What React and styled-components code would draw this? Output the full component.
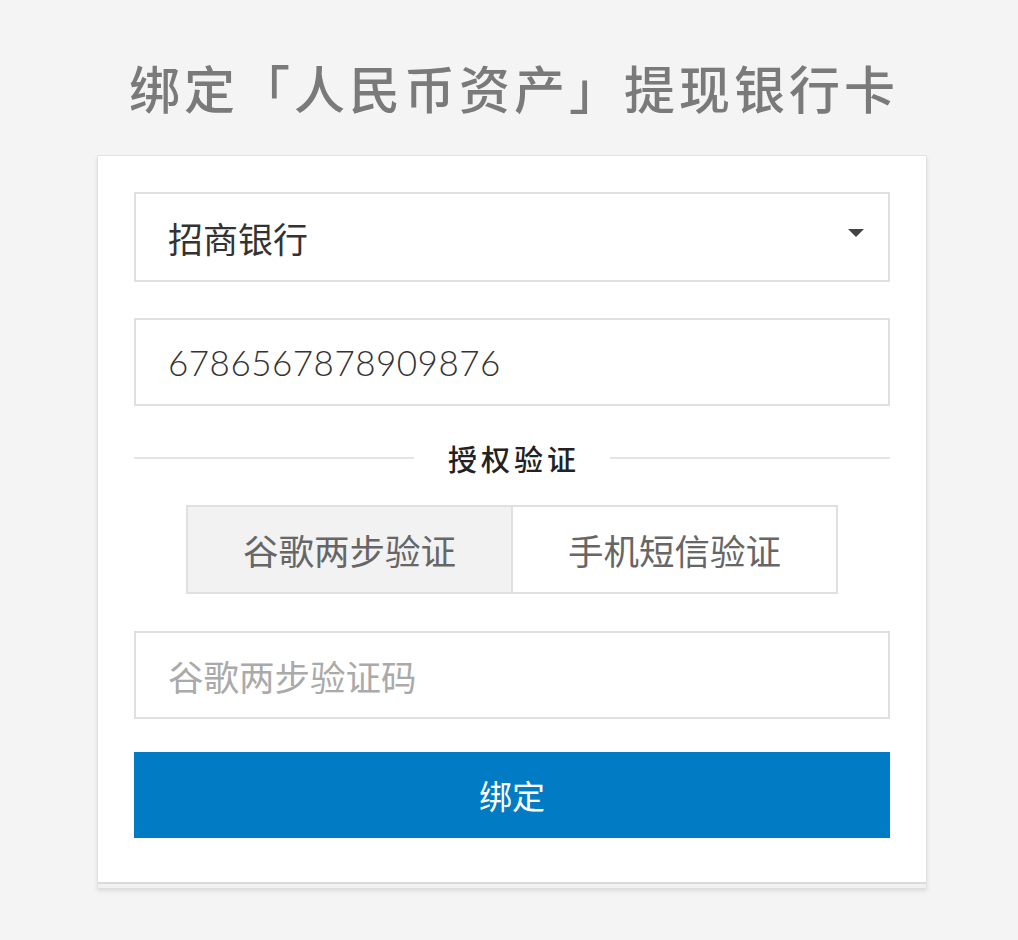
import React, { useState } from "react";
import styled, { createGlobalStyle } from "styled-components";

const GlobalStyle = createGlobalStyle`
  html, body {
    margin: 0;
    padding: 0;
    background: #f4f4f4;
    font-family: "Noto Sans CJK SC", "Lato", sans-serif;
  }
`;

const BindCard = () => {
  const [method, setMethod] = useState("google");

  return (
    <>
      <GlobalStyle />
      <Page>
        <Title>绑定「人民币资产」提现银行卡</Title>
        <Card>
          <CardBody>
            <SelectBox>
              <span>招商银行</span>
              <Caret />
            </SelectBox>
            <Field>
              <NumberText>6786567878909876</NumberText>
            </Field>
            <Divider>
              <Line />
              <DividerText>授权验证</DividerText>
              <Line />
            </Divider>
            <Tabs>
              <Tab active={method === "google"} onClick={() => setMethod("google")}>
                谷歌两步验证
              </Tab>
              <Tab active={method === "sms"} onClick={() => setMethod("sms")}>
                手机短信验证
              </Tab>
            </Tabs>
            <Field>
              <Placeholder>
                {method === "google" ? "谷歌两步验证码" : "短信验证码"}
              </Placeholder>
            </Field>
            <SubmitButton>绑定</SubmitButton>
          </CardBody>
          <CardFoot />
        </Card>
      </Page>
    </>
  );
};

const Page = styled.div`
  width: 830px;
  margin-left: 97px;
  padding-top: 51px;
  padding-bottom: 50px;
`;

const Title = styled.h1`
  margin: 0 0 32px;
  text-align: center;
  font-size: 51px;
  font-weight: 500;
  line-height: 72px;
  letter-spacing: 4px;
  color: #7a7a7a;
  padding-left: 4px;
`;

const Card = styled.div`
  background: #fff;
  border: 1px solid #e2e2e2;
  border-bottom: none;
  box-shadow: 0 3px 4px rgba(0, 0, 0, 0.1);
`;

const CardBody = styled.div`
  display: flex;
  flex-direction: column;
  padding: 36px 36px 44px;
`;

const CardFoot = styled.div`
  height: 4px;
  border-top: 2px solid #dadada;
  background: #f1f1f1;
`;

const Field = styled.div`
  display: flex;
  align-items: center;
  height: 84px;
  padding: 0 32px;
  border: 2px solid #e0e0e0;
  margin-bottom: 36px;
`;

const SelectBox = styled(Field)`
  height: 86px;
  justify-content: space-between;
  font-size: 35px;
  color: #333;
  padding-right: 24px;
`;

const Caret = styled.span`
  width: 0;
  height: 0;
  border-left: 8px solid transparent;
  border-right: 8px solid transparent;
  border-top: 8px solid #444;
  margin-top: -8px;
`;

const NumberText = styled.span`
  font-family: "Lato", sans-serif;
  font-weight: 300;
  font-size: 35px;
  letter-spacing: 0.5px;
  color: #333;
`;

const Placeholder = styled.span`
  font-size: 35.5px;
  color: #aaa;
`;

const Divider = styled.div`
  display: flex;
  align-items: center;
  gap: 34px;
  height: 32px;
  margin-bottom: 31px;
`;

const Line = styled.div`
  flex: 1;
  height: 2px;
  background: #e4e4e4;
`;

const DividerText = styled.span`
  font-size: 29px;
  font-weight: 500;
  letter-spacing: 4px;
  margin-right: -4px;
  color: #222;
  line-height: 32px;
`;

const Tabs = styled.div`
  display: flex;
  align-self: center;
  width: 652px;
  margin-bottom: 37px;
`;

const Tab = styled.button`
  flex: 1;
  height: 89px;
  border: 2px solid #e0e0e0;
  background: ${(p) => (p.active ? "#f2f2f2" : "#fff")};
  font-family: "Noto Sans CJK SC", sans-serif;
  font-size: 35.5px;
  color: #666;
  cursor: pointer;
  padding: 0;
  & + & {
    border-left: none;
  }
`;

const SubmitButton = styled.button`
  height: 86px;
  margin-top: -3px;
  border: none;
  background: #027bc5;
  color: #fff;
  font-family: "Noto Sans CJK SC", sans-serif;
  font-size: 33px;
  cursor: pointer;
`;

export default function App() {
  return <BindCard />;
}
